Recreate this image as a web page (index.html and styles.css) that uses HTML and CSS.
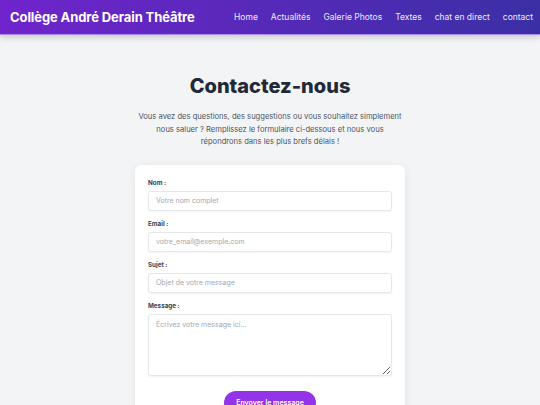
FILE: index.html
```html
<!DOCTYPE html>
<html lang="fr">
<head>
  <meta charset="UTF-8">
  <meta name="viewport" content="width=device-width, initial-scale=1.0">
  <title>Contact - Collège André Derain Théâtre</title>
  <link rel="stylesheet" href="styles.css">
</head>
<body>
  <header class="topbar">
    <div class="brand">Collège André Derain Théâtre</div>
    <nav class="nav">
      <a href="#">Home</a>
      <a href="#">Actualités</a>
      <a href="#">Galerie Photos</a>
      <a href="#">Textes</a>
      <a href="#">chat en direct</a>
      <a href="#">contact</a>
    </nav>
  </header>
  <main class="page">
    <h1 class="title">Contactez-nous</h1>
    <p class="intro">Vous avez des questions, des suggestions ou vous souhaitez simplement nous saluer ? Remplissez le formulaire ci-dessous et nous vous répondrons dans les plus brefs délais !</p>
    <form class="card">
      <div class="field">
        <label for="nom">Nom :</label>
        <input id="nom" type="text" placeholder="Votre nom complet">
      </div>
      <div class="field">
        <label for="email">Email :</label>
        <input id="email" type="email" placeholder="votre_email@exemple.com">
      </div>
      <div class="field">
        <label for="sujet">Sujet :</label>
        <input id="sujet" type="text" placeholder="Objet de votre message">
      </div>
      <div class="field">
        <label for="message">Message :</label>
        <textarea id="message" placeholder="Écrivez votre message ici..."></textarea>
      </div>
      <div class="actions">
        <button type="submit">Envoyer le message</button>
      </div>
    </form>
  </main>
</body>
</html>
```

FILE: styles.css
```css
:root {
  --bg: #f3f4f6;
  --text: #1f2937;
  --muted: #4b5563;
  --border: #e5e7eb;
  --purple: #9333ea;
}
body {
  margin: 0;
  font-family: Inter, "Noto Sans", Arial, sans-serif;
  background-color: var(--bg);
  color: var(--text);
  overflow: hidden;
}
.topbar {
  display: flex;
  align-items: center;
  justify-content: space-between;
  height: 34px;
  padding: 0 7px 0 10px;
  background: linear-gradient(90deg, #7024cc, #3b2fa5);
  border-bottom: 1px solid #a78bfa;
  box-shadow: 0 3px 6px rgba(0, 0, 0, 0.15);
}
.brand {
  color: white;
  font-weight: 700;
  font-size: 13px;
  letter-spacing: -0.1px;
}
.nav {
  display: flex;
  gap: 13px;
}
.nav a {
  color: #ede9fe;
  text-decoration: none;
  font-size: 8.5px;
}
.page {
  display: flex;
  flex-direction: column;
  align-items: center;
  padding-top: 38px;
}
.title {
  margin: 0;
  font-size: 20px;
  font-weight: 800;
  color: #1f2937;
  line-height: 26px;
}
.intro {
  width: 270px;
  margin: 12px 0 16px;
  text-align: center;
  font-size: 7.6px;
  line-height: 12.5px;
  color: var(--muted);
}
.card {
  width: 244px;
  padding: 14px 13px 6px;
  background: white;
  border-radius: 6px;
  box-shadow: 0 2px 8px rgba(0, 0, 0, 0.08);
}
.field {
  display: flex;
  flex-direction: column;
  margin-bottom: 9px;
}
.field label {
  font-size: 6.3px;
  line-height: 8px;
  font-weight: 700;
  color: #374151;
  margin-bottom: 4px;
}
.field input,
.field textarea {
  font-family: inherit;
  font-size: 7px;
  color: var(--text);
  border: 1px solid var(--border);
  border-radius: 3px;
  padding: 0 7px;
  box-shadow: 0 1px 2px rgba(0, 0, 0, 0.05);
  outline: none;
}
.field input {
  height: 20px;
  box-sizing: border-box;
}
.field textarea {
  height: 62px;
  box-sizing: border-box;
  padding-top: 5px;
  resize: vertical;
}
.field input::placeholder,
.field textarea::placeholder {
  color: #a3a8b1;
}
.actions {
  display: flex;
  justify-content: center;
  padding-top: 6px;
}
.actions button {
  width: 92px;
  height: 24px;
  border: none;
  border-radius: 12px;
  background-color: var(--purple);
  color: white;
  font-family: inherit;
  font-size: 7px;
  font-weight: 600;
  cursor: pointer;
}
```
